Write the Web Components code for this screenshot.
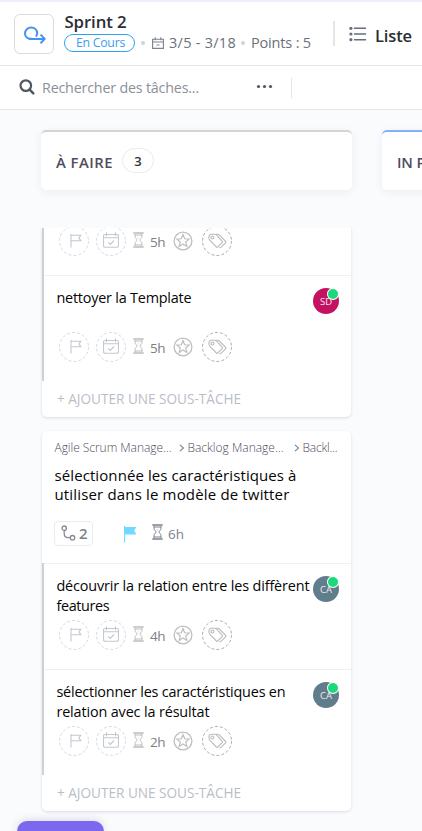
<!DOCTYPE html>
<html lang="fr">
<head>
<meta charset="utf-8">
<title>Sprint 2</title>
<style>
html,body{margin:0;height:831px;overflow:hidden;background:#fafbfd;font-family:"Open Sans","Noto Sans",sans-serif}
</style>
</head>
<body>
<sprint-board></sprint-board>
<script>
const ICONS = {
  sprint: [24,18,'<path d="M8.700 12.700C4.500 13.300 2 10.900 2 7.500C2 4 4.800 1.500 8.200 1.500C11.700 1.500 14.200 4 14.200 7C14.200 8.400 13.700 9.600 12.900 10.600M5.500 12.900H21M17.500 8.600L21.800 12.900L17.500 17.200" fill="none" stroke="#4592f7" stroke-width="2" stroke-linejoin="round"/>'],
  date: [12,12,'<path d="M.6 2.200H11.400V11.400H.6ZM.6 5H11.400M3.200.2V3.200M8.800.2V3.200M4.500 8H7.500" fill="none" stroke="#7c828d" stroke-width="1.100"/>'],
  list: [18,16,'<g fill="#656f7d"><circle cx="1.900" cy="2.300" r="1.600"/><circle cx="1.900" cy="8" r="1.600"/><circle cx="1.900" cy="13.700" r="1.600"/></g><path d="M5.500 2.300H16.500M5.500 8H16.500M5.500 13.700H16.500" stroke="#656f7d" stroke-width="1.500" stroke-linecap="round"/>'],
  search: [16,16,'<circle cx="6.800" cy="6.600" r="5.300" fill="none" stroke="#4f5762" stroke-width="2.200"/><path d="M10.700 10.700L14.300 14.300" stroke="#4f5762" stroke-width="2.500" stroke-linecap="round"/>'],
  dots: [17,5,'<g fill="#4f5762"><circle cx="2.500" cy="2.500" r="1.600"/><circle cx="8.500" cy="2.500" r="1.600"/><circle cx="14.500" cy="2.500" r="1.600"/></g>'],
  ring: [30,30,'<circle cx="15" cy="15" r="14.500" fill="none" stroke="currentColor" stroke-dasharray="3 2.060"/>'],
  flag: [12,14,'<path d="M1 0V13.500M1 1.200H10.800L8.900 3.900L10.800 6.700H1" fill="none" stroke="#c3c8d1" stroke-width="1.100"/>'],
  calendar: [16,16,'<path d="M2 2.500H14Q15.500 2.500 15.500 4V13.500Q15.500 15.200 14 15.200H2Q.5 15.200.5 13.500V4Q.5 2.500 2 2.500ZM.5 5.700H15.500M3.500.2V4.200M12.500.2V4.200M5.200 10.400L7.300 12.400L11 8.500" fill="none" stroke="#c3c8d1" stroke-width="1.100"/>'],
  hourglass: [11,16,'<path d="M.3 1H10.700M.3 15H10.700" stroke="currentColor" stroke-width="1.500"/><path d="M2 2V4.200C2 6.300 4 7 4 8C4 9 2 9.700 2 11.800V14M9 2V4.200C9 6.300 7 7 7 8C7 9 9 9.700 9 11.800V14M2 3H9M2 13H9" fill="none" stroke="currentColor" stroke-width="1"/><path d="M4 5.300H7L6 6.500H5Z" fill="currentColor" opacity=".3"/>'],
  star: [20,20,'<circle cx="10" cy="10" r="8.900" fill="none" stroke="#bebebe" stroke-width="1.300"/><path d="M10 3.600L11.700 7.800L16.200 8.100L12.700 11L13.900 15.400L10 13L6.100 15.400L7.300 11L3.800 8.100L8.300 7.800Z" fill="none" stroke="#bebebe" stroke-width="1.200"/>'],
  tags: [19,16,'<g fill="none" stroke="#bcbcbc" stroke-width="1.100" stroke-linejoin="round"><path d="M1 3.700Q1 1.400 3.200 1.200L6.800 1.200Q7.800 1.200 8.500 1.900L14.300 8.300Q14.800 9 14.200 9.600L9.700 14Q9 14.600 8.400 14L1.900 7.400Q1.200 6.800 1 5.500Z"/><path d="M8 1.200H9.600Q10.600 1.200 11.300 1.900L17.700 8.500Q18.200 9.200 17.600 9.800L13.200 14.200Q12.500 14.800 11.500 14.500"/><circle cx="4.400" cy="4.500" r="1.500"/></g>'],
  branch: [15,16,'<g fill="none" stroke="#858a94" stroke-width="1.300"><circle cx="3.200" cy="3.200" r="2.200"/><circle cx="11.500" cy="12.700" r="2.200"/><path d="M3.200 5.500V8.500Q3.200 12.700 7.400 12.700H9.200"/></g>'],
  solid: [13,18,'<path d="M.6 1V17.500" stroke="#6fd9ff" stroke-width="1.100"/><path d="M.6 2H12.300L10.300 5.600L12.300 9.500H.6Z" fill="#6fd9ff"/>'],
  chevron: [6,8,'<path d="M1 .8L4.500 4L1 7.200" fill="none" stroke="#7c828d" stroke-width="1.100"/>']
};
class UiIcon extends HTMLElement {
  connectedCallback(){
    const [w,h,body]=ICONS[this.getAttribute('name')];
    this.attachShadow({mode:'open'}).innerHTML=`<style>:host{display:block;flex:none;width:${w}px;height:${h}px}svg{display:block}</style><svg width="${w}" height="${h}" viewBox="0 0 ${w} ${h}">${body}</svg>`;
  }
}
/* Single line of text whose tracking is tuned so that it fills the given width. */
class UiText extends HTMLElement {
  connectedCallback(){
    const w=+this.getAttribute('w');
    const root=this.attachShadow({mode:'open'});
    root.innerHTML=`<style>:host{display:block;flex:none;width:${w}px;white-space:nowrap}span{display:inline-block}</style><span><slot></slot></span>`;
    const span=root.querySelector('span');
    const n=this.textContent.length;
    span.style.letterSpacing=((w-span.getBoundingClientRect().width)/Math.max(1,n))+'px';
  }
}
class UiAvatar extends HTMLElement {
  connectedCallback(){
    this.attachShadow({mode:'open'}).innerHTML=`<style>
    :host{display:grid;place-items:center;flex:none;position:relative;width:26px;height:26px;border-radius:50%;background:var(--c);color:#f3e9ee;font-size:9.500px;line-height:28px}
    i{position:absolute;right:0;top:0;width:10px;height:9.500px;border-radius:50%;background:#1bd97b;border:1px solid #fff}</style><slot></slot><i></i>`;
  }
}
class SprintHeader extends HTMLElement {
  connectedCallback(){
    this.attachShadow({mode:'open'}).innerHTML=`<style>
    :host{display:flex;box-sizing:border-box;height:66px;border-top:2px solid #efeefa;border-bottom:1px solid #e6e7ea;background:#fff;padding:12px 0 0 14px}
    .logo{box-sizing:border-box;width:40px;height:40px;border:1px solid #d9dbe0;border-radius:6px;display:grid;place-items:center;padding:1px 0 0 2px;flex:none}
    .info{margin-left:10px;width:269px;flex:none}
    .title{font-size:16.800px;font-weight:600;line-height:20px;color:#292d34;margin-top:-2px;padding-left:.5px}
    .meta{display:flex;align-items:center;height:18px;margin-top:2px;color:#6b7079;font-size:14.500px;line-height:18px}
    .pill{box-sizing:border-box;width:71px;height:18px;border:1px solid #2da3f2;border-radius:9px;color:#3aa0ee;font-size:12.300px;line-height:16px;padding-left:11px}
    .dot{width:4px;height:4px;border-radius:50%;background:#d0d3da;flex:none}
    .sep{width:2px;height:25px;background:#e4e5ea;margin-top:7px;flex:none}
    .view{display:flex;align-items:center;height:40px;margin-left:14px;gap:8px;color:#292d34;font-size:16.500px;font-weight:600}
    </style><div class="logo"><ui-icon name="sprint"></ui-icon></div>
    <div class="info"><ui-text class="title" w="62">Sprint 2</ui-text>
    <div class="meta"><div class="pill"><ui-text w="49">En Cours</ui-text></div><i class="dot" style="margin:0 6px"></i><ui-icon name="date" style="margin-left:1px"></ui-icon><ui-text w="67" style="margin-left:5px">3/5 - 3/18</ui-text><i class="dot" style="margin:0 6px 0 5px"></i><ui-text w="60">Points : 5</ui-text></div></div>
    <i class="sep"></i><div class="view"><ui-icon name="list"></ui-icon><ui-text w="37" style="margin-top:2px">Liste</ui-text></div>`;
  }
}
class SearchBar extends HTMLElement {
  connectedCallback(){
    this.attachShadow({mode:'open'}).innerHTML=`<style>
    :host{display:flex;align-items:center;box-sizing:border-box;height:44px;border-bottom:1px solid #e6e7ea;background:#fff;padding-left:19px;color:#8b9099;font-size:14.300px}
    i{width:1px;height:20px;background:#e4e5ea;margin-left:18px}
    </style><ui-icon name="search" style="margin-top:-1px"></ui-icon><ui-text w="157" style="margin-left:7px">Rechercher des tâches...</ui-text><ui-icon name="dots" style="margin:-2px 0 0 57px"></ui-icon><i></i>`;
  }
}
class ColumnHead extends HTMLElement {
  connectedCallback(){
    this.attachShadow({mode:'open'}).innerHTML=`<style>
    :host{display:flex;align-items:center;flex:none;box-sizing:border-box;width:311px;height:60px;border-top:2px solid var(--top);border-radius:5px;background:#fff;box-shadow:0 2px 10px #1c28400f;padding:1px 0 0 15px;color:#514b60;font-weight:600;font-size:14.800px}
    b{box-sizing:border-box;width:32px;height:25px;border:1px solid #e9ebf0;border-radius:13px;display:grid;place-items:center;font-size:13px;font-weight:600;color:#30343c;margin:-2px 0 0 9px}
    </style><slot></slot>${this.hasAttribute('count')?`<b>${this.getAttribute('count')}</b>`:''}`;
  }
}
class SubTask extends HTMLElement {
  connectedCallback(){
    const lines=this.hasAttribute('lines')?JSON.parse(this.getAttribute('lines')):[];
    const av=this.getAttribute('avatar');
    this.attachShadow({mode:'open'}).innerHTML=`<style>
    :host{display:flex;flex-direction:column;justify-content:flex-end;box-sizing:border-box;height:106px;border-left:2px solid #d0d0d0;overflow:hidden}
    .row{flex:none;box-sizing:border-box;height:106px;border-top:1px solid #f0f0f1;padding:12px 12px 0 12px;display:grid;grid-template-columns:1fr 26px;grid-template-rows:44px 30px}
    .name{color:#050505;font-size:14.400px;line-height:20px;padding-left:.4px}
    .tools{display:flex;align-items:center;grid-column:1/3;padding-left:3px;color:#d5d9e0}
    .ring{display:grid;place-items:center;width:30px;height:30px;flex:none}.ring>*{grid-area:1/1}
    ui-text.h{color:#7b7f86;font-size:13.500px;line-height:20px;margin:1px 9px 0 6px}
    </style><div class="row"><div class="name">${lines.map(l=>`<ui-text w="${l[1]}">${l[0]}</ui-text>`).join('')}</div>
    ${av?`<ui-avatar style="--c:${av==='SD'?'#c51162':'#607d8b'}">${av}</ui-avatar>`:'<span></span>'}
    <div class="tools"><div class="ring"><ui-icon name="ring"></ui-icon><ui-icon name="flag" style="margin-left:3px"></ui-icon></div>
    <div class="ring" style="margin-left:7px"><ui-icon name="ring"></ui-icon><ui-icon name="calendar" style="margin-top:-2px"></ui-icon></div>
    <ui-icon name="hourglass" style="color:#bcbcbc;margin:-3px 0 0 7px"></ui-icon><ui-text class="h" w="15">${this.getAttribute('time')}</ui-text>
    <ui-icon name="star" style="margin-left:-1px"></ui-icon><div class="ring" style="margin-left:9px;color:#acacac"><ui-icon name="ring"></ui-icon><ui-icon name="tags"></ui-icon></div></div></div>`;
  }
}
class TaskCard extends HTMLElement {
  connectedCallback(){
    this.attachShadow({mode:'open'}).innerHTML=`<style>
    :host{display:block;background:#fff;width:309px;border-radius:5px;box-shadow:0 1px 3px #1c284026}
    :host([cut]){border-top-left-radius:0;border-top-right-radius:0}
    .add{height:36px;box-sizing:border-box;padding:7px 0 0 15px;color:#b9bec7;font-size:13.600px;line-height:22px}
    </style><slot></slot><div class="add"><ui-text w="184">+ AJOUTER UNE SOUS-TÂCHE</ui-text></div>`;
  }
}
class TaskSummary extends HTMLElement {
  connectedCallback(){
    this.attachShadow({mode:'open'}).innerHTML=`<style>
    :host{display:block;box-sizing:border-box;height:132px;padding:8px 0 0 12px}
    .crumbs{display:flex;align-items:center;height:18px;font-size:12px;line-height:18px;font-weight:300;color:#514b60;padding-left:.5px}
    .title{font-size:15px;line-height:19px;color:#050505;margin-top:9px;padding-left:.5px}
    .tools{display:flex;align-items:center;height:26px;margin-top:16px;color:#7c828d}
    .chip{box-sizing:border-box;width:39px;height:25px;border:1px solid #e9ebf0;border-radius:4px;display:flex;align-items:center;gap:3px;padding-left:6px;font-size:15px;font-weight:600}
    </style><div class="crumbs"><ui-text w="117">Agile Scrum Manage...</ui-text><ui-icon name="chevron" style="margin:0 3px 0 7px"></ui-icon><ui-text w="96">Backlog Manage...</ui-text><ui-icon name="chevron" style="margin:0 3px 0 10px"></ui-icon><ui-text w="35">Backl...</ui-text></div>
    <div class="title"><ui-text w="242">sélectionnée les caractéristiques à</ui-text><ui-text w="235">utiliser dans le modèle de twitter</ui-text></div>
    <div class="tools"><div class="chip"><ui-icon name="branch"></ui-icon><ui-text w="9">2</ui-text></div><ui-icon name="solid" style="margin:1px 0 0 31px"></ui-icon><ui-icon name="hourglass" style="margin:-3px 0 0 15px"></ui-icon><ui-text w="16" style="margin:2px 0 0 5px;font-size:13.500px">6h</ui-text></div>`;
  }
}
class SprintBoard extends HTMLElement {
  connectedCallback(){
    this.attachShadow({mode:'open'}).innerHTML=`<style>
    :host{display:block;width:422px;height:831px;overflow:hidden}
    .cols{display:flex;gap:30px;padding:20px 0 0 41px}
    .list{display:flex;flex-direction:column;gap:14px;margin-top:38px;padding-left:42px;height:603px;clip-path:inset(0)}
    .fab{position:absolute;left:17px;top:821px;width:87px;height:10px;background:#7b68ee;border-radius:12px 12px 0 0;box-shadow:0 0 10px #1c284030}
    </style><sprint-header></sprint-header><search-bar></search-bar>
    <div class="cols"><column-head count="3" style="--top:#d3d5d5"><ui-text w="57">À FAIRE</ui-text></column-head><column-head style="--top:#82b1ff"><ui-text w="93">IN PROGRESS</ui-text></column-head></div>
    <div class="list"><task-card cut><sub-task time="5h" style="height:47px"></sub-task><sub-task time="5h" avatar="SD" lines='[["nettoyer la Template",135]]'></sub-task></task-card>
    <task-card><task-summary></task-summary><sub-task time="4h" avatar="CA" lines='[["découvrir la relation entre les diffèrent",253],["features",53]]'></sub-task><sub-task time="2h" avatar="CA" lines='[["sélectionner les caractéristiques en",229],["relation avec la résultat",153]]'></sub-task></task-card></div>
    <div class="fab"></div>`;
  }
}
for(const [n,c] of [['ui-icon',UiIcon],['ui-text',UiText],['ui-avatar',UiAvatar],['sprint-header',SprintHeader],['search-bar',SearchBar],['column-head',ColumnHead],['sub-task',SubTask],['task-summary',TaskSummary],['task-card',TaskCard],['sprint-board',SprintBoard]]) customElements.define(n,c);
</script>
</body>
</html>
